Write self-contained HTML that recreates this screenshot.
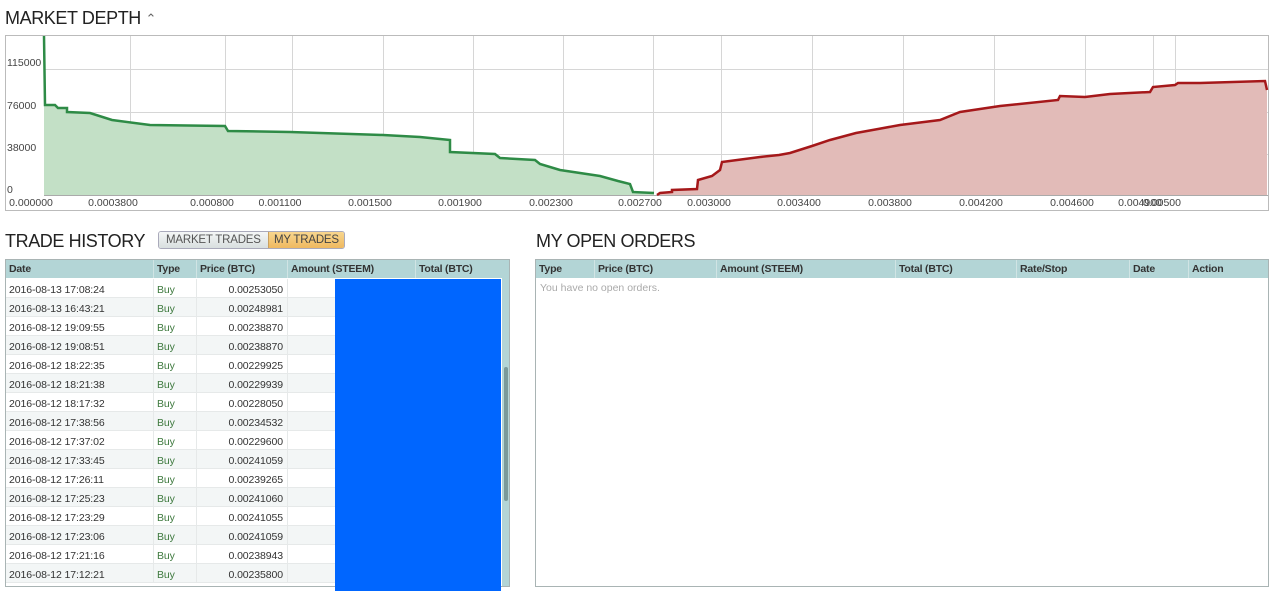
<!DOCTYPE html>
<html><head><meta charset="utf-8"><style>
*{box-sizing:border-box;margin:0;padding:0}
body{width:1280px;height:599px;background:#fff;font-family:"Liberation Sans",Arial,sans-serif;position:relative;overflow:hidden;color:#333}
.h{position:absolute;font-size:18px;color:#222;letter-spacing:-0.4px}
.tbl{position:absolute;border:1px solid #a9b4b4;background:#fff;overflow:hidden}
.hd{position:absolute;left:0;top:0;right:0;height:18px;background:#b3d5d6}
.hd span{position:absolute;top:3px;font-size:10.5px;font-weight:bold;color:#333;letter-spacing:-0.2px}
.hd i{position:absolute;top:0;width:1px;height:18px;background:#d0e4e4}
.row{position:absolute;left:0;width:495px;height:19px;border-bottom:1px solid #e6e9e9;font-size:10.5px;letter-spacing:-0.1px}
.row span{position:absolute;top:5px}
.row i{position:absolute;top:0;width:1px;height:19px;background:#e6e9e9}
</style></head><body>
<div class="h" style="left:5px;top:8px">MARKET DEPTH <span style="font-size:13px;color:#666;position:relative;top:-1px">&#8963;</span></div>
<svg style="position:absolute;left:0;top:0" width="1280" height="215">
<rect x="5.5" y="35.5" width="1263" height="175" fill="#fff" stroke="#bbb"/>
<g stroke="#d6d6d6" stroke-width="1">
<line x1="44" y1="69.5" x2="1268" y2="69.5"/><line x1="44" y1="112.5" x2="1268" y2="112.5"/><line x1="44" y1="154.5" x2="1268" y2="154.5"/>
<line x1="130.5" y1="36" x2="130.5" y2="196"/><line x1="225.5" y1="36" x2="225.5" y2="196"/><line x1="292.5" y1="36" x2="292.5" y2="196"/><line x1="383.5" y1="36" x2="383.5" y2="196"/><line x1="473.5" y1="36" x2="473.5" y2="196"/><line x1="563.5" y1="36" x2="563.5" y2="196"/><line x1="653.5" y1="36" x2="653.5" y2="196"/><line x1="721.5" y1="36" x2="721.5" y2="196"/><line x1="812.5" y1="36" x2="812.5" y2="196"/><line x1="903.5" y1="36" x2="903.5" y2="196"/><line x1="994.5" y1="36" x2="994.5" y2="196"/><line x1="1085.5" y1="36" x2="1085.5" y2="196"/><line x1="1153.5" y1="36" x2="1153.5" y2="196"/><line x1="1175.5" y1="36" x2="1175.5" y2="196"/>
</g>
<line x1="44" y1="195.5" x2="1268" y2="195.5" stroke="#aaa"/>
<line x1="44.5" y1="36" x2="44.5" y2="196" stroke="#aaa"/>
<path d="M44,195 L44,36 L45,105 L55,105 L58,108 L67,108 L67,112 L90,113 L112,120 L150,125 L225,126 L228,131 L290,132 L383,135 L420,137 L450,140 L450,152 L495,154 L500,158 L535,160 L540,164 L560,170 L600,176 L618,181 L630,184 L633,192 L654,193 L654,195 Z" fill="#c3e0c6" stroke="none"/>
<path d="M44,36 L45,105 L55,105 L58,108 L67,108 L67,112 L90,113 L112,120 L150,125 L225,126 L228,131 L290,132 L383,135 L420,137 L450,140 L450,152 L495,154 L500,158 L535,160 L540,164 L560,170 L600,176 L618,181 L630,184 L633,192 L654,193" fill="none" stroke="#2e8b46" stroke-width="2.5"/>
<path d="M657,195 L660,193 L672,192 L672,190 L697,189 L698,180 L712,176 L720,170 L722,162 L760,157 L779,155 L790,153 L812,146 L830,140 L856,133 L900,125 L940,120 L960,112 L1000,106 L1058,100 L1060,96 L1085,97 L1110,94 L1150,92 L1153,87 L1175,85 L1178,83 L1200,83 L1265,81 L1267,90 L1267,195 Z" fill="#e2bbb8"/>
<path d="M657,195 L660,193 L672,192 L672,190 L697,189 L698,180 L712,176 L720,170 L722,162 L760,157 L779,155 L790,153 L812,146 L830,140 L856,133 L900,125 L940,120 L960,112 L1000,106 L1058,100 L1060,96 L1085,97 L1110,94 L1150,92 L1153,87 L1175,85 L1178,83 L1200,83 L1265,81 L1267,90" fill="none" stroke="#a5181a" stroke-width="2.5"/>
<g font-family="Liberation Sans,sans-serif" font-size="10.5" fill="#444">
<text x="7" y="66">115000</text><text x="7" y="109">76000</text><text x="7" y="151">38000</text><text x="7" y="193">0</text>
<g text-anchor="middle"><text x="31" y="206">0.000000</text><text x="113" y="206">0.0003800</text><text x="212" y="206">0.000800</text><text x="280" y="206">0.001100</text><text x="370" y="206">0.001500</text><text x="460" y="206">0.001900</text><text x="551" y="206">0.002300</text><text x="640" y="206">0.002700</text><text x="709" y="206">0.003000</text><text x="799" y="206">0.003400</text><text x="890" y="206">0.003800</text><text x="981" y="206">0.004200</text><text x="1072" y="206">0.004600</text><text x="1140" y="206">0.004900</text><text x="1162" y="206">0.00500</text></g>
</g>
</svg>

<div class="h" style="left:5px;top:231px">TRADE HISTORY</div>
<div style="position:absolute;left:158px;top:231px;width:187px;height:18px;border:1px solid #aab;border-radius:3px;overflow:hidden;font-size:11.5px;letter-spacing:-0.2px">
<div style="position:absolute;left:0;top:0;width:109px;height:18px;background:linear-gradient(#f4f6f6,#d5dcdc);color:#555;padding:2px 0 0 7px">MARKET TRADES</div>
<div style="position:absolute;left:109px;top:0;width:78px;height:18px;background:linear-gradient(#f8d68e,#eeb55a);color:#444;padding:2px 0 0 5px;border-left:1px solid #c9a060">MY TRADES</div>
</div>
<div class="tbl" style="left:5px;top:259px;width:505px;height:328px;background:#b3d5d6">
<div style="position:absolute;left:0;top:18px;width:496px;height:310px;background:#fff"></div>
<div class="hd"><span style="left:3px">Date</span><i style="left:147px"></i><span style="left:151px">Type</span><i style="left:190px"></i><span style="left:194px">Price (BTC)</span><i style="left:281px"></i><span style="left:285px">Amount (STEEM)</span><i style="left:409px"></i><span style="left:413px">Total (BTC)</span></div>
<div id="rows"></div>
<div style="position:absolute;left:498px;top:107px;width:4px;height:134px;background:#7a9a9a;border-radius:2px"></div>
</div>
<div style="position:absolute;left:335px;top:279px;width:166px;height:312px;background:#0066ff"></div>

<div class="h" style="left:536px;top:231px">MY OPEN ORDERS</div>
<div class="tbl" style="left:535px;top:259px;width:734px;height:328px">
<div class="hd"><span style="left:3px">Type</span><i style="left:58px"></i><span style="left:62px">Price (BTC)</span><i style="left:180px"></i><span style="left:184px">Amount (STEEM)</span><i style="left:359px"></i><span style="left:363px">Total (BTC)</span><i style="left:480px"></i><span style="left:484px">Rate/Stop</span><i style="left:593px"></i><span style="left:597px">Date</span><i style="left:652px"></i><span style="left:656px">Action</span></div>
<div style="position:absolute;left:4px;top:22px;font-size:10.5px;color:#aaa">You have no open orders.</div>
</div>
<script>
var d=[["2016-08-13 17:08:24","0.00253050"],["2016-08-13 16:43:21","0.00248981"],["2016-08-12 19:09:55","0.00238870"],["2016-08-12 19:08:51","0.00238870"],["2016-08-12 18:22:35","0.00229925"],["2016-08-12 18:21:38","0.00229939"],["2016-08-12 18:17:32","0.00228050"],["2016-08-12 17:38:56","0.00234532"],["2016-08-12 17:37:02","0.00229600"],["2016-08-12 17:33:45","0.00241059"],["2016-08-12 17:26:11","0.00239265"],["2016-08-12 17:25:23","0.00241060"],["2016-08-12 17:23:29","0.00241055"],["2016-08-12 17:23:06","0.00241059"],["2016-08-12 17:21:16","0.00238943"],["2016-08-12 17:12:21","0.00235800"]];
var h="";d.forEach(function(r,i){h+='<div class="row" style="top:'+(19+i*19)+'px;background:'+(i%2?'#f3f6f6':'#fff')+'"><span style="left:3px">'+r[0]+'</span><i style="left:147px"></i><span style="left:151px;color:#3f7a3f">Buy</span><i style="left:190px"></i><span style="left:194px;width:83px;text-align:right">'+r[1]+'</span><i style="left:281px"></i></div>';});
document.getElementById("rows").innerHTML=h;
</script>
</body></html>
